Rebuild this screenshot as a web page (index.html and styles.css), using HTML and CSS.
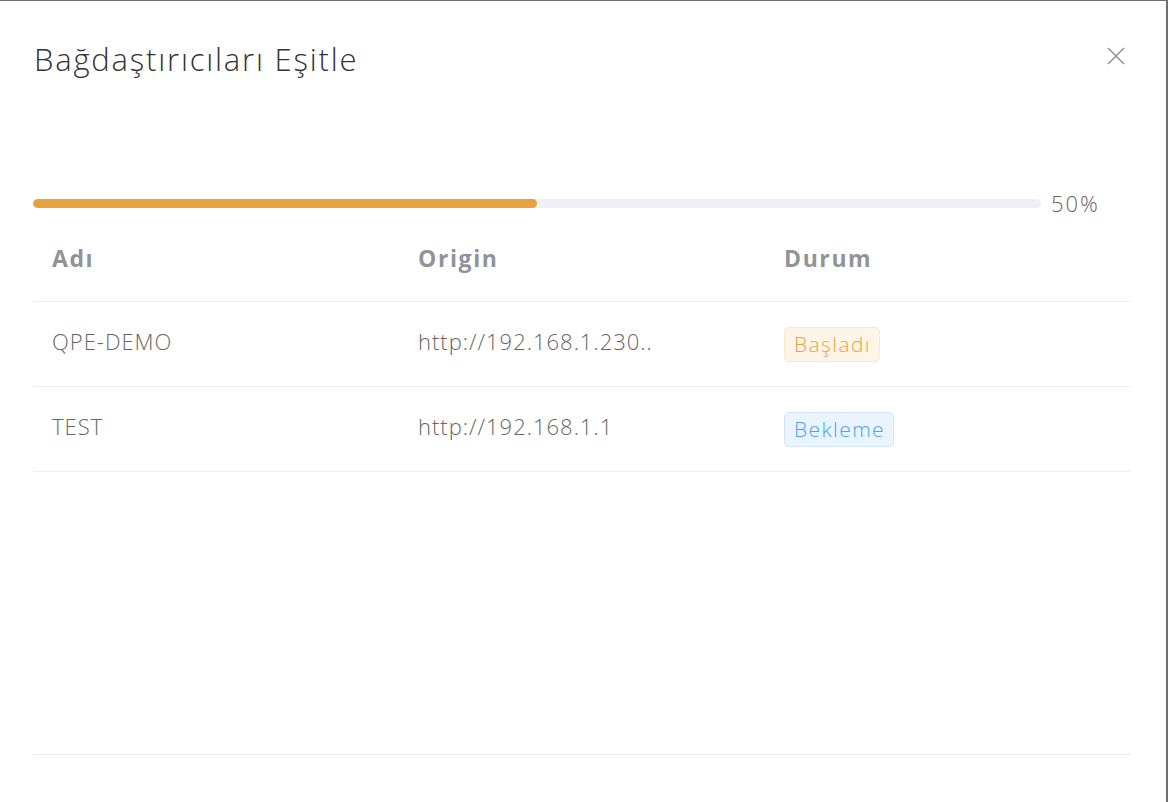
FILE: index.html
```html
<!DOCTYPE html>
<html lang="tr">
<head>
  <meta charset="UTF-8" />
  <meta name="viewport" content="width=device-width, initial-scale=1.0"/>
  <title>Bağdaştırıcıları Eşitle</title>
  <link rel="stylesheet" href="styles.css">
</head>
<body>
  <div class="modal">
    <div class="modal-header">
      <h1>Bağdaştırıcıları Eşitle</h1>
      <button class="close-btn" aria-label="Kapat">
        <svg width="18" height="18" viewBox="0 0 18 18">
          <path d="M1 1L17 17M17 1L1 17" stroke="#8c8c8c" stroke-width="1.4" fill="none"/>
        </svg>
      </button>
    </div>

    <div class="progress">
      <div class="progress-track">
        <div class="progress-fill" style="width: 50%"></div>
      </div>
      <span class="progress-label">50%</span>
    </div>

    <table class="sync-table">
      <thead>
        <tr>
          <th>Adı</th>
          <th>Origin</th>
          <th>Durum</th>
        </tr>
      </thead>
      <tbody>
        <tr>
          <td>QPE-DEMO</td>
          <td>http://192.168.1.230..</td>
          <td><span class="badge badge-started">Başladı</span></td>
        </tr>
        <tr>
          <td>TEST</td>
          <td>http://192.168.1.1</td>
          <td><span class="badge badge-waiting">Bekleme</span></td>
        </tr>
      </tbody>
    </table>

    <div class="modal-footer"></div>
  </div>
</body>
</html>
```

FILE: styles.css
```css
body {
  font-family: "Open Sans", Arial, sans-serif;
  margin: 0;
  padding: 0;
  background: #fff;
  color: #333;
}
.modal {
  height: 802px;
  box-sizing: border-box;
  display: flex;
  flex-direction: column;
  padding: 0 35px 0 33px;
  border-top: 1px solid #6e6e6e;
  border-right: 2px solid #6e6e6e;
  background: white;
}
.modal-header {
  display: flex;
  justify-content: space-between;
  align-items: center;
  padding-top: 36px;
  height: 44px;
}
h1 {
  margin: 0 0 0 1px;
  font-size: 31px;
  font-weight: 300;
  letter-spacing: 1.8px;
  line-height: 44px;
  color: #333;
}
.close-btn {
  background: none;
  border: none;
  padding: 0;
  margin: -6px 6px 0 0;
  width: 18px;
  height: 18px;
  cursor: pointer;
}
.close-btn svg {
  display: block;
}
.progress {
  display: flex;
  align-items: center;
  gap: 10px;
  margin-top: 111px;
  height: 22px;
  padding-right: 30px;
}
.progress-track {
  flex: 1;
  height: 9px;
  background: #edf0f5;
  border-radius: 5px;
  overflow: hidden;
}
.progress-fill {
  height: 100%;
  background: #e8a23d;
  border-radius: 5px;
}
.progress-label {
  width: 50px;
  font-size: 22px;
  font-weight: 300;
  letter-spacing: 2px;
  color: #666;
  line-height: 22px;
}
.sync-table {
  width: 100%;
  border-collapse: collapse;
  table-layout: fixed;
}
.sync-table th,
.sync-table td {
  text-align: left;
  padding: 0 0 0 19px;
  border-bottom: 1px solid #eceef3;
}
.sync-table th {
  height: 87px;
  font-size: 23px;
  font-weight: 700;
  letter-spacing: 1.6px;
  color: #929299;
}
.sync-table td {
  height: 78px;
  padding-bottom: 6px;
  font-size: 22px;
  font-weight: 300;
  letter-spacing: 1px;
  color: #666;
}
.badge {
  display: inline-block;
  margin-top: 6px;
  padding: 0 8px 0 9px;
  line-height: 33px;
  font-size: 21px;
  font-weight: 300;
  letter-spacing: 1.4px;
  border-radius: 5px;
  border: 1px solid;
}
.badge-started {
  color: #e8a23d;
  background: #fef5e8;
  border-color: #fce7c8;
}
.badge-waiting {
  color: #48a2f5;
  background: #eaf4ff;
  border-color: #cfe5fd;
}
.modal-footer {
  margin-top: auto;
  height: 47px;
  border-top: 1px solid #e6e9ef;
}
```
